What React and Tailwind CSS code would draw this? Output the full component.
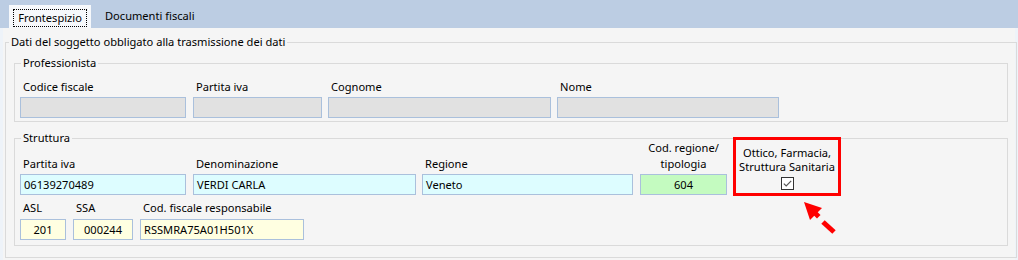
import React from 'react'

const FIELD_BG = {
  gray: 'bg-[#e1e1e1]',
  cyan: 'bg-[#ddfdff]',
  green: 'bg-[#c4fbc0]',
  yellow: 'bg-[#ffffe1]',
}

function Field({ label, value, w, ml = 0, bg = 'gray', center, gap = 'mb-[2px]' }) {
  return (
    <div className="flex flex-col shrink-0" style={{ width: w, marginLeft: ml }}>
      <div className={`leading-[16px] pl-[3px] whitespace-nowrap ${gap}`}>{label}</div>
      <div
        className={`h-[21px] border border-[#aac0dc] flex items-center px-[3px] leading-[16px] ${FIELD_BG[bg]} ${
          center ? 'justify-center' : ''
        }`}
      >
        {value}
      </div>
    </div>
  )
}

function Checkbox() {
  return (
    <svg width="13" height="13" viewBox="0 0 13 13" className="block">
      <rect x="0.5" y="0.5" width="12" height="12" fill="#fff" stroke="#333" />
      <path d="M2.8 6.6 L5.2 9 L10.2 3.8" fill="none" stroke="#555" strokeWidth="1.2" />
    </svg>
  )
}

export default function App() {
  return (
    <div className="relative w-[1018px] h-[260px] overflow-hidden bg-[#eef3f9] text-[11.1px] text-black font-['Noto_Sans',sans-serif]">
      {/* tabs */}
      <div className="h-[28px] bg-[#bccde3] flex items-end pl-[9px]">
        <div className="w-[82px] h-[23px] bg-[#f6f8fb] pt-[5px] px-[5px]">
          <div className="h-[16px] outline outline-1 outline-dotted outline-black flex items-center justify-center leading-[16px]">
            Frontespizio
          </div>
        </div>
        <div className="ml-[14px] h-[23px] flex items-center pb-[2px] leading-[16px]">Documenti fiscali</div>
      </div>

      {/* tab page */}
      <div className="mx-[3px] h-[232px] bg-[#f5f5f5] pt-[6px]">
        <fieldset className="ml-[2px] w-[1009px] border border-[#dadada] px-[8px] pb-[11px]">
          <legend className="-ml-[5px] px-[2px] leading-[16px]">
            Dati del soggetto obbligato alla trasmissione dei dati
          </legend>

          <fieldset className="mt-[5px] w-[994px] border border-[#dadada] px-[5px] pt-[8px] pb-[3px]">
            <legend className="ml-[1px] px-[2px] leading-[16px]">Professionista</legend>
            <div className="flex">
              <Field label="Codice fiscale" w={166} />
              <Field label="Partita iva" w={129} ml={7} />
              <Field label="Cognome" w={223} ml={6} />
              <Field label="Nome" w={222} ml={6} />
            </div>
          </fieldset>

          <fieldset className="mt-[8px] w-[994px] border border-[#dadada] px-[5px] pb-[5px]">
            <legend className="ml-[1px] px-[2px] leading-[16px]">Struttura</legend>
            <div className="flex items-end h-[49px]">
              <Field label="Partita iva" value="06139270489" w={166} bg="cyan" />
              <Field label="Denominazione" value="VERDI CARLA" w={223} ml={7} bg="cyan" />
              <Field label="Regione" value="Veneto" w={211} ml={6} bg="cyan" />
              <Field
                label={
                  <div className="text-center -ml-[3px]">
                    Cod. regione/
                    <br />
                    tipologia
                  </div>
                }
                value="604"
                w={87}
                ml={7}
                bg="green"
                center
              />
              <div className="ml-[6px] w-[108px] h-[59px] -mb-[1px] shrink-0 border-[3px] border-[#ff0000] flex flex-col items-center pt-[6px] leading-[14px] whitespace-nowrap">
                <div>Ottico, Farmacia,</div>
                <div>Struttura Sanitaria</div>
                <div className="mt-[3px]">
                  <Checkbox />
                </div>
              </div>
            </div>
            <div className="flex mt-[5px]">
              <Field label="ASL" value="201" w={46} bg="yellow" center gap="mb-[3px]" />
              <Field label="SSA" value="000244" w={60} ml={7} bg="yellow" center gap="mb-[3px]" />
              <Field label="Cod. fiscale responsabile" value="RSSMRA75A01H501X" w={164} ml={7} bg="yellow" gap="mb-[3px]" />
            </div>
          </fieldset>
        </fieldset>
      </div>

      {/* red pointer annotation */}
      <svg className="absolute left-0 top-0 pointer-events-none" width="1018" height="260">
        <polygon points="804,202 822,208 810,220" fill="#f00" />
        <rect x="814.5" y="212.5" width="5" height="5" fill="#f00" transform="rotate(45 817 215)" />
        <line x1="823" y1="222" x2="834" y2="232" stroke="#f00" strokeWidth="5" />
      </svg>
    </div>
  )
}
